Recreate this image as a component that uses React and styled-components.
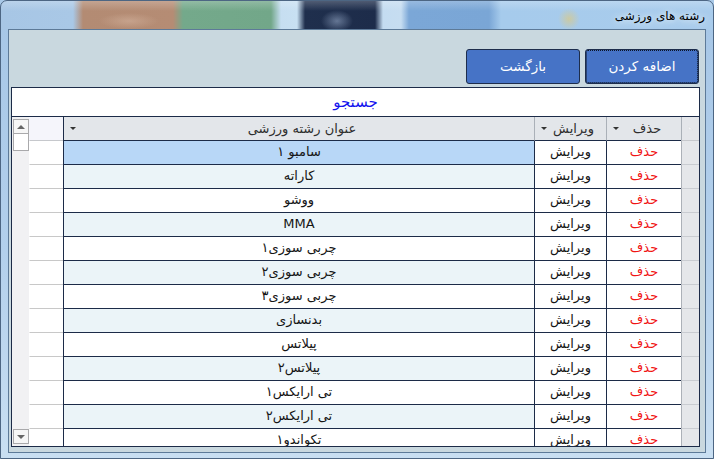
import styled, { createGlobalStyle } from "styled-components";

const GlobalStyle = createGlobalStyle`
  html, body {
    margin: 0;
    padding: 0;
    background: #a9c9e8;
    overflow: hidden;
  }
  body {
    font-family: "DejaVu Sans", "Noto Sans", sans-serif;
  }
`;

const NAVY = "#1c2b48";

// desktop colours seen through the glass title bar
const glassTiles = `linear-gradient(to right,
  #a7c6e5 0px, #a9c8e6 72px, #b38b73 82px, #b58c74 172px,
  #74a98b 182px, #72a789 270px, #c6def1 280px, #c8e0f2 296px,
  #1f2f4d 304px, #1d2c4a 374px, #c4dcf1 382px, #c6ddf1 400px,
  #7ba7d7 408px, #7aa6d6 488px, #a6cbec 500px, #a9ccec 714px)`;

const Window = styled.div`
  box-sizing: border-box;
  width: 714px;
  height: 459px;
  display: flex;
  flex-direction: column;
  padding: 0 7px 5px 7px;
  border: 1px solid #4d6683;
  border-radius: 7px 7px 0 0;
  background:
    linear-gradient(to bottom, rgba(255, 255, 255, 0.22) 0px, rgba(255, 255, 255, 0) 10px) top / 100% 29px no-repeat,
    radial-gradient(circle at 568px 18px, rgba(240, 200, 90, 0.5), rgba(240, 200, 90, 0) 11px) top / 100% 29px no-repeat,
    radial-gradient(ellipse 16px 11px at 336px 20px, rgba(170, 190, 220, 0.5), rgba(170, 190, 220, 0) 100%) top / 100% 29px no-repeat,
    radial-gradient(ellipse 30px 8px at 128px 20px, rgba(220, 190, 170, 0.45), rgba(220, 190, 170, 0) 100%) top / 100% 29px no-repeat,
    ${glassTiles} top / 100% 29px no-repeat,
    linear-gradient(to bottom, #a6c6e6 0%, #b3d0ec 55%, #c9dff2 100%);
`;

const TitleBar = styled.div`
  height: 28px;
  flex: none;
  display: flex;
  align-items: center;
  justify-content: flex-end;
  padding-right: 1px;
`;

const TitleText = styled.span`
  font-size: 12px;
  color: #000;
  direction: rtl;
  padding-top: 2px;
  text-shadow: 0 0 6px rgba(235, 245, 252, 0.95), 0 0 10px rgba(235, 245, 252, 0.8);
`;

const Client = styled.div`
  flex: 1;
  display: flex;
  flex-direction: column;
  border: 1px solid #5d7a98;
  background: #c9d8df;
  padding: 19px 5px 0 2px;
  overflow: hidden;
`;

const ButtonRow = styled.div`
  display: flex;
  justify-content: flex-end;
  gap: 5px;
  padding-right: 1px;
  margin-bottom: 3px;
`;

const ActionButton = styled.button`
  box-sizing: border-box;
  width: 114px;
  height: 35px;
  border: 1px solid #1d2d4c;
  border-radius: 3px;
  background: #4673c6;
  color: #fff;
  font-family: "DejaVu Sans", sans-serif;
  font-size: 13.5px;
  direction: rtl;
  padding: 0 0 2px;
  outline: ${(p) => (p.$focused ? "1px dotted #0b1426" : "none")};
  outline-offset: -2px;
`;

const SearchBox = styled.div`
  box-sizing: border-box;
  height: 29px;
  border: 1px solid ${NAVY};
  border-bottom: none;
  background: #fff;
  display: flex;
  align-items: center;
  justify-content: center;
  color: #1414ee;
  font-size: 15px;
  direction: rtl;
`;

const Grid = styled.div`
  box-sizing: border-box;
  height: 331px;
  border: 1px solid ${NAVY};
  background: #fff;
  display: flex;
  overflow: hidden;
`;

const ScrollTrack = styled.div`
  width: 17px;
  flex: none;
  box-sizing: border-box;
  padding: 2px 0 2px 1px;
  background: #f1f1f3;
  display: flex;
  flex-direction: column;
`;

const ScrollButton = styled.div`
  box-sizing: border-box;
  height: 15px;
  border: 1px solid #a9a9ab;
  background: #f6f6f6;
  display: flex;
  align-items: center;
  justify-content: center;
  margin-top: ${(p) => (p.$down ? "auto" : "0")};
`;

const ScrollThumb = styled.div`
  box-sizing: border-box;
  height: 18px;
  margin-top: -1px;
  border: 1px solid #a9a9ab;
  background: #fff;
`;

const Arrow = styled.span`
  width: 0;
  height: 0;
  border-left: 4px solid transparent;
  border-right: 4px solid transparent;
  ${(p) =>
    p.$down
      ? "border-top: 4px solid #666;"
      : "border-bottom: 4px solid #666;"}
`;

const Table = styled.div`
  flex: 1;
  direction: rtl;
`;

const columns = "18px 75px 72px 471px 1fr";

const HeaderRow = styled.div`
  display: grid;
  grid-template-columns: ${columns};
  height: 24px;
`;

const Row = styled.div`
  display: grid;
  grid-template-columns: ${columns};
  height: 24px;
`;

const headerBg = {
  corner: "#e4e6ea",
  del: "#e3e6ea",
  edit: "#e3e6ea",
  title: "#e3e6ea",
  blank: "#f5f5fb",
};

const HeaderCell = styled.div`
  box-sizing: border-box;
  display: flex;
  align-items: center;
  justify-content: space-between;
  padding: 0 6px 1px 6px;
  background: ${(p) => headerBg[p.$kind]};
  border-bottom: 1px solid ${(p) => (p.$kind === "blank" || p.$kind === "corner" ? "#c6c8cc" : NAVY)};
  border-left: 1px solid ${(p) => (p.$kind === "title" ? NAVY : p.$kind === "blank" ? "transparent" : "#aab0b8")};
  color: #2e2e2e;
  font-size: 13px;
  white-space: nowrap;
  overflow: hidden;
`;

const HeaderLabel = styled.span`
  flex: 1;
  text-align: center;
`;

const SortArrow = styled.span`
  width: 0;
  height: 0;
  border-left: 3px solid transparent;
  border-right: 3px solid transparent;
  border-top: 3px solid #333;
  margin-top: 1px;
`;

const cellBg = (p) => {
  if (p.$kind === "rowhdr") return "#e5e7ea";
  if (p.$kind === "title") {
    if (p.$selected) return "#b8d7f7";
    if (p.$alt) return "#ebf4f8";
  }
  return "#fff";
};

const cellLeft = (kind) => {
  if (kind === "blank") return "transparent";
  if (kind === "rowhdr") return "#acb1b8";
  return NAVY;
};

const cellBottom = (kind) => {
  if (kind === "blank") return "#c8c8c8";
  if (kind === "rowhdr") return "#c9ccd1";
  return NAVY;
};

const Cell = styled.div`
  box-sizing: border-box;
  display: flex;
  align-items: center;
  justify-content: center;
  padding-bottom: 2px;
  background: ${cellBg};
  border-left: 1px solid ${(p) => cellLeft(p.$kind)};
  border-bottom: 1px solid ${(p) => cellBottom(p.$kind)};
  color: ${(p) => (p.$kind === "del" ? "#f01414" : "#151515")};
  font-size: 13px;
  white-space: nowrap;
  overflow: hidden;
`;

const CornerGlyph = () => (
  <svg width="12" height="10" viewBox="0 0 12 10">
    <path d="M1 1 L11 9 L1 9 Z" fill="#f2f3f5" stroke="#d4d7dc" strokeWidth="0.8" />
  </svg>
);

const sports = [
  "سامبو ۱",
  "کاراته",
  "ووشو",
  "MMA",
  "چربی سوزی۱",
  "چربی سوزی۲",
  "چربی سوزی۳",
  "بدنسازی",
  "پیلاتس",
  "پیلاتس۲",
  "تی ارایکس۱",
  "تی ارایکس۲",
  "تکواندو۱",
];

export default function App() {
  return (
    <>
      <GlobalStyle />
      <Window>
        <TitleBar>
          <TitleText>رشته های ورزشی</TitleText>
        </TitleBar>
        <Client>
          <ButtonRow>
            <ActionButton>بازگشت</ActionButton>
            <ActionButton $focused>اضافه کردن</ActionButton>
          </ButtonRow>
          <SearchBox>جستجو</SearchBox>
          <Grid>
            <ScrollTrack>
              <ScrollButton>
                <Arrow />
              </ScrollButton>
              <ScrollThumb />
              <ScrollButton $down>
                <Arrow $down />
              </ScrollButton>
            </ScrollTrack>
            <Table>
              <HeaderRow>
                <HeaderCell $kind="corner">
                  <CornerGlyph />
                </HeaderCell>
                <HeaderCell $kind="del">
                  <HeaderLabel>حذف</HeaderLabel>
                  <SortArrow />
                </HeaderCell>
                <HeaderCell $kind="edit">
                  <HeaderLabel>ویرایش</HeaderLabel>
                  <SortArrow />
                </HeaderCell>
                <HeaderCell $kind="title">
                  <HeaderLabel>عنوان رشته ورزشی</HeaderLabel>
                  <SortArrow />
                </HeaderCell>
                <HeaderCell $kind="blank" />
              </HeaderRow>
              {sports.map((name, i) => (
                <Row key={name}>
                  <Cell $kind="rowhdr" />
                  <Cell $kind="del">حذف</Cell>
                  <Cell $kind="edit">ویرایش</Cell>
                  <Cell $kind="title" $selected={i === 0} $alt={i % 2 === 1}>
                    {name}
                  </Cell>
                  <Cell $kind="blank" />
                </Row>
              ))}
            </Table>
          </Grid>
        </Client>
      </Window>
    </>
  );
}
